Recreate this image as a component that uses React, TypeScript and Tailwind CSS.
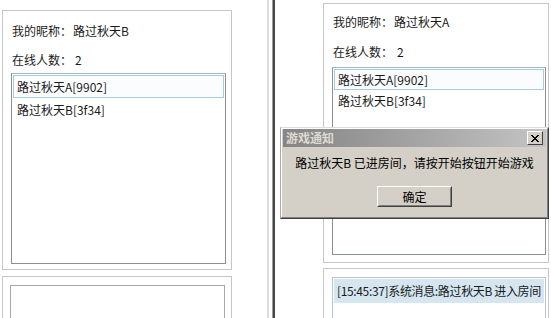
const font = { fontFamily: '"Noto Sans CJK SC", "Noto Sans", sans-serif' };

function InfoLine({ label, value, labelWidth }: { label: string; value: string; labelWidth: string }) {
  return (
    <div className="flex h-[20px] items-center text-[12px] text-[#1a1a1a]">
      <span className={labelWidth}>{label}</span>
      <span>{value}</span>
    </div>
  );
}

function UserList({ height, rowH }: { height: string; rowH: string }) {
  const users = ["路过秋天A[9902]", "路过秋天B[3f34]"];
  return (
    <div className={`${height} border border-[#8b8f96] border-t-[#a9b6c2] bg-white p-[1px]`}>
      {users.map((u, i) => (
        <div
          key={u}
          className={`${rowH} flex items-center pl-[3px] text-[12px] text-[#1a1a1a] ${
            i === 0 ? "border border-[#a3cbe2] bg-[#fafcfe]" : "border border-transparent"
          }`}
        >
          {u}
        </div>
      ))}
    </div>
  );
}

function CloseButton() {
  return (
    <div className="flex h-[14px] w-[16px] items-center justify-center border border-t-white border-l-white border-r-[#404040] border-b-[#404040] bg-[#d4d0c8]">
      <svg width="8" height="7" viewBox="0 0 8 7" shapeRendering="crispEdges">
        <path d="M0 0h2v1h1v1h2v-1h1v-1h2v1h-1v1h-1v1h-1v1h1v1h1v1h1v1h-2v-1h-1v-1h-2v1h-1v1h-2v-1h1v-1h1v-1h1v-1h-1v-1h-1v-1h-1z" fill="#000" />
      </svg>
    </div>
  );
}

function Dialog() {
  return (
    <div className="absolute left-[280px] top-[127px] h-[92px] w-[269px] border border-t-[#dcdcdc] border-l-[#a8a8a8] border-r-[#404040] border-b-[#404040] bg-[#d4d0c8]">
      <div className="h-full border border-t-white border-l-white border-r-[#808080] border-b-[#808080] px-[1px]">
        <div className="flex h-[18px] items-center justify-between bg-gradient-to-r from-[#858585] to-[#c4c4c4] pl-[3px] pr-[3px]">
          <span className="text-[12px] font-bold text-[#dedad2]">游戏通知</span>
          <CloseButton />
        </div>
        <div className="mt-[7px] flex h-[18px] items-center justify-center text-[12px] text-black">
          路过秋天B 已进房间，请按开始按钮开始游戏
        </div>
        <div className="mt-[14px] flex justify-center">
          <div className="border border-t-white border-l-white border-r-[#404040] border-b-[#404040]">
            <div className="flex h-[19px] w-[73px] items-center justify-center border border-transparent border-r-[#808080] border-b-[#808080] text-[12px] text-black">
              确定
            </div>
          </div>
        </div>
      </div>
    </div>
  );
}

export default function App() {
  return (
    <div className="relative flex h-[318px] w-[551px] overflow-hidden bg-white" style={font}>
      {/* left window */}
      <div className="flex w-[267px] flex-col pl-[2px]">
        <div className="mt-[10px] h-[260px] w-[230px] shrink-0 border border-[#c6c6c6] pl-[8px] pr-[5px] pt-[10px]">
          <div className="pl-[1px]">
            <InfoLine label="我的昵称：" value="路过秋天B" labelWidth="w-[61px]" />
          </div>
          <div className="mt-[9px] pl-[1px]">
            <InfoLine label="在线人数：" value="2" labelWidth="w-[63px]" />
          </div>
          <div className="mt-[3px]">
            <UserList height="h-[191px]" rowH="h-[23px]" />
          </div>
        </div>
        <div className="mt-[6px] h-[80px] w-[230px] shrink-0 border border-[#c6c6c6] pl-[7px] pr-[6px] pt-[8px]">
          <div className="h-full border border-[#a8a8a8] bg-white" />
        </div>
      </div>

      {/* window separator */}
      <div className="w-[2px] bg-[#dcdcdc]" />
      <div className="w-[3px] bg-white" />
      <div className="w-[1px] bg-[#9a9a9a]" />
      <div className="w-[2px] bg-[#474747]" />

      {/* right window */}
      <div className="flex flex-1 flex-col pl-[48px]">
        <div className="mt-[3px] h-[260px] w-[226px] shrink-0 border border-[#c6c6c6] pl-[8px] pr-[2px] pt-[8px]">
          <div className="pl-[1px]">
            <InfoLine label="我的昵称：" value="路过秋天A" labelWidth="w-[61px]" />
          </div>
          <div className="mt-[10px] pl-[1px]">
            <InfoLine label="在线人数：" value="2" labelWidth="w-[64px]" />
          </div>
          <div className="mt-[5px]">
            <UserList height="h-[188px]" rowH="h-[21px]" />
          </div>
        </div>
        <div className="mt-[5px] h-[80px] w-[226px] shrink-0 border border-[#c6c6c6] pl-[8px] pr-[2px] pt-[8px]">
          <div className="h-full overflow-hidden border border-[#b9c3cc] bg-white p-[1px]">
            <div className="flex h-[24px] items-center whitespace-nowrap bg-[#d5e6f0] pl-[3px] text-[12px] tracking-[-0.35px] text-[#1a1a1a]">
              [15:45:37]系统消息:路过秋天B 进入房间
            </div>
          </div>
        </div>
      </div>

      <Dialog />
    </div>
  );
}
